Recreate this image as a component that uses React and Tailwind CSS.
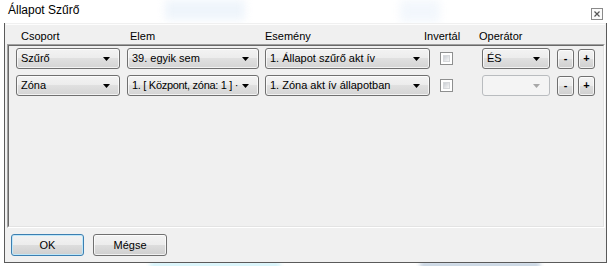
import React from "react";

const font = { fontFamily: '"Liberation Sans", Arial, sans-serif' };

const Arrow = ({ disabled }) => (
  <svg width="7" height="4" viewBox="0 0 7 4" className="shrink-0">
    <path d="M0 0 H7 L3.5 4 Z" fill={disabled ? "#a7a7a7" : "#000"} />
  </svg>
);

const Combo = ({ w, children, disabled }) =>
  disabled ? (
    <div
      className={`${w} h-[21px] shrink-0 flex items-center justify-end pr-[9px] rounded-[3px] border border-[#b9bcbf] bg-[#f4f4f4]`}
    >
      <Arrow disabled />
    </div>
  ) : (
    <div
      className={`${w} h-[21px] shrink-0 flex items-center rounded-[3px] border border-[#707070] bg-[linear-gradient(#f3f3f3_0%,#ececec_50%,#e0e0e0_50%,#d4d4d4_100%)] shadow-[inset_0_0_0_1px_rgba(255,255,255,0.7)] pl-[4px] pr-[9px]`}
    >
      <span className="flex-1 overflow-hidden whitespace-nowrap text-[11px] leading-[15px] text-black">{children}</span>
      <Arrow />
    </div>
  );

const Check = () => (
  <div className="w-[13px] h-[13px] shrink-0 border border-[#8e8f8f] bg-white p-[2px]">
    <div className="w-full h-full bg-[linear-gradient(135deg,#cbcfd5,#f6f6f6)] border border-[#d6d8db]" />
  </div>
);

const SmallBtn = ({ label, ml }) => (
  <div
    className={`${ml} w-[17px] h-[20px] shrink-0 flex items-center justify-center rounded-[3px] border border-[#707070] bg-[linear-gradient(#f3f3f3_0%,#ececec_50%,#dddddd_50%,#cfcfcf_100%)] shadow-[inset_0_0_0_1px_rgba(255,255,255,0.7)] text-[11px] leading-none font-bold text-black`}
  >
    {label}
  </div>
);

const Row = ({ group, elem, event, op }) => (
  <div className="flex items-center h-[21px]">
    <div className="ml-[7px]" />
    <Combo w="w-[104px]">{group}</Combo>
    <div className="ml-[7px]" />
    <Combo w="w-[132px]">{elem}</Combo>
    <div className="ml-[6px]" />
    <Combo w="w-[165px]">{event}</Combo>
    <div className="ml-[10px]" />
    <Check />
    <div className="ml-[29px]" />
    {op ? <Combo w="w-[68px]">{op}</Combo> : <Combo w="w-[68px]" disabled />}
    <SmallBtn label="-" ml="ml-[7px]" />
    <SmallBtn label="+" ml="ml-[4px]" />
  </div>
);

const Btn = ({ children, primary, w }) => (
  <div
    className={`${w} h-[22px] flex items-center justify-center rounded-[3px] border ${
      primary
        ? "border-[#3c7fb1] shadow-[inset_0_0_0_1px_#bfe7f9]"
        : "border-[#707070] shadow-[inset_0_0_0_1px_rgba(255,255,255,0.7)]"
    } bg-[linear-gradient(#f3f3f3_0%,#ececec_50%,#dddddd_50%,#cfcfcf_100%)] text-[11px] text-black`}
  >
    {children}
  </div>
);

export default function App() {
  return (
    <div className="relative w-[611px] h-[266px] bg-white overflow-hidden" style={font}>
      {/* aero glass blur behind the window */}
      <div className="absolute left-[165px] top-[0px] w-[80px] h-[20px] bg-[#e4eef9] blur-[4px] opacity-60" />
      <div className="absolute left-[400px] top-[0px] w-[40px] h-[22px] bg-[#eaf2fb] blur-[5px] opacity-60" />
      <div className="absolute left-[150px] top-[262px] w-[130px] h-[6px] bg-[#d2f3fa] blur-[2px]" />
      <div className="absolute left-[420px] top-[262px] w-[120px] h-[6px] bg-[#a9bdd2] blur-[2px] opacity-70" />

      <div className="relative flex flex-col h-full">
        {/* title bar */}
        <div className="h-[23px] flex items-start justify-between pl-[8px] pr-[8px] pt-[2px]">
          <span className="text-[12px] text-black leading-[16px]">Állapot Szűrő</span>
          <div className="mt-[6px] w-[12px] h-[12px] border border-[#8a8a8a] bg-[#fbfbfb] flex items-center justify-center">
            <svg width="6" height="6" viewBox="0 0 6 6">
              <path d="M0.5 0.5 L5.5 5.5 M5.5 0.5 L0.5 5.5" stroke="#555" strokeWidth="1.2" />
            </svg>
          </div>
        </div>

        {/* client area */}
        <div className="mx-[4px] h-[240px] border-x border-b border-[#5a5a5a] bg-[#f0f0f0] flex flex-col px-[1px]">
          <div className="mt-[1px] h-[204px] flex flex-col border-t border-[#fdfdfd]">
            {/* header labels */}
            <div className="h-[19px] flex items-end pb-[1px] text-[11px] text-black leading-[13px]">
              <span className="ml-[15px] w-[109px]">Csoport</span>
              <span className="w-[135px]">Elem</span>
              <span className="w-[159px]">Esemény</span>
              <span className="w-[55px]">Invertál</span>
              <span>Operátor</span>
            </div>
            {/* rows panel */}
            <div className="flex-1 ml-[1px] border-t border-l border-[#a0a0a0] border-b border-r border-b-white border-r-white">
              <div className="h-full border-t border-l border-[#696969] border-b border-r border-b-[#e3e3e3] border-r-[#e3e3e3] flex flex-col pt-[2px] gap-[6px]">
                <Row
                  group="Szűrő"
                  elem="39. egyik sem"
                  event={
                    <>
                      1. Állapot szűrő akt<span className="ml-[3px]">ív</span>
                    </>
                  }
                  op="ÉS"
                />
                <Row
                  group="Zóna"
                  elem={<span className="tracking-[-0.3px]">1. [ Központ, zóna: 1 ] ·</span>}
                  event={
                    <>
                      1. Zóna akt<span className="ml-[3px]">ív</span> állapotban
                    </>
                  }
                />
              </div>
            </div>
          </div>

          {/* buttons */}
          <div className="mt-[6px] flex items-center">
            <div className="ml-[5px]" />
            <Btn primary w="w-[73px]">OK</Btn>
            <div className="ml-[9px]" />
            <Btn w="w-[74px]">Mégse</Btn>
          </div>
        </div>
      </div>
    </div>
  );
}
